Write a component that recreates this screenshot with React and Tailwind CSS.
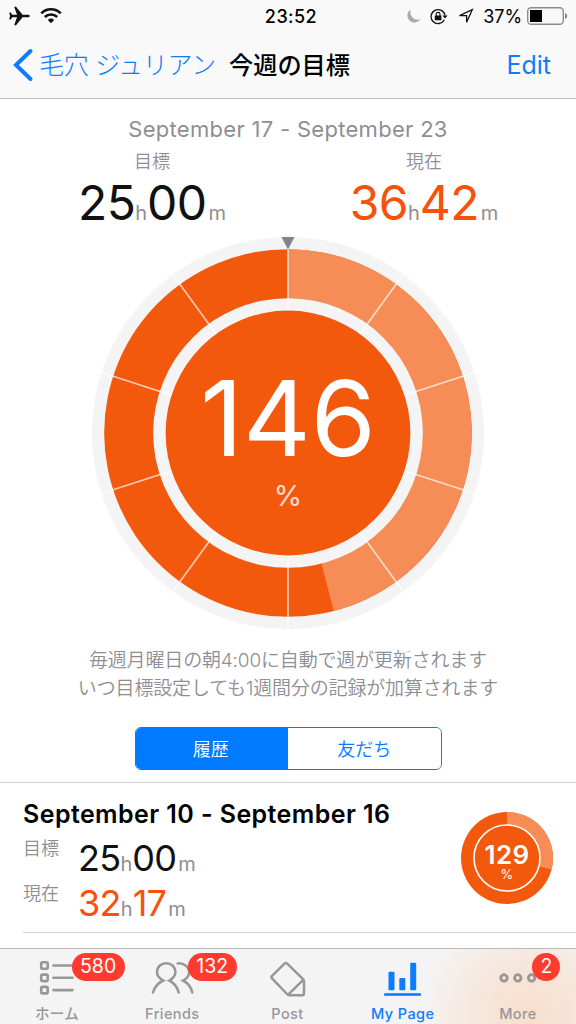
import clsx from "clsx";

const ORANGE = "#f2590d";
const LIGHT = "#f68c56";

const polar = (cx, cy, r, deg) => {
  const a = ((deg - 90) * Math.PI) / 180;
  return [cx + r * Math.cos(a), cy + r * Math.sin(a)];
};

const wedge = (cx, cy, r, deg) => {
  const [x, y] = polar(cx, cy, r, deg);
  return `M${cx} ${cy}V${cy - r}A${r} ${r} 0 ${deg > 180 ? 1 : 0} 1 ${x} ${y}Z`;
};

function StatusBar() {
  return (
    <div className="flex h-8 items-center justify-between px-2 text-black">
      <div className="flex w-[206px] items-center gap-[10px]">
        <svg width="22" height="20" viewBox="0 0 22 20">
          <path
            d="M21.8 10c0-.9-.8-1.200-1.700-1.200h-5.500L8 .8H6.200L9 8.800H4.400L2.600 6.400H1.200L2 10l-.8 3.600h1.400L4.400 11.200H9l-2.800 8H8l6.600-8h5.500c.9 0 1.700-.3 1.700-1.200z"
            fill="#111"
          />
        </svg>
        <svg width="22" height="16" viewBox="0 0 22 16" fill="none" stroke="#111">
          <path d="M1.3 5.3a13.8 13.8 0 0 1 19.4 0" strokeWidth="2.6" />
          <path d="M4.8 9a8.8 8.8 0 0 1 12.4 0" strokeWidth="2.6" />
          <path d="M11 15.2l-3.2-3.3a4.6 4.6 0 0 1 6.4 0z" fill="#111" stroke="none" />
        </svg>
      </div>
      <span className="text-[18px] font-medium tracking-[0.45px]">23:52</span>
      <div className="flex w-[200px] items-center justify-end">
        <svg width="16" height="16" viewBox="0 0 16 16" className="mr-[8px]">
          <path d="M5 1.500a7 7 0 1 0 9.500 9.500A7.200 7.200 0 0 1 5 1.500z" fill="#aaa" />
        </svg>
        <svg width="18" height="17" viewBox="0 0 18 17" className="mr-[10px]">
          <path d="M14.3 11.8A7 7 0 1 1 15 7.500" fill="none" stroke="#111" strokeWidth="1.3" />
          <path d="M12.4 7.500h5.200L15 10.500z" fill="#111" />
          <rect x="4.8" y="7.5" width="6.6" height="4.7" rx=".5" fill="#111" />
          <path d="M6.200 8V6.300a1.900 1.900 0 0 1 3.800 0V8" fill="none" stroke="#111" strokeWidth="1.1" />
        </svg>
        <svg width="16" height="16" viewBox="0 0 16 16" className="mr-[9px]">
          <path d="M1.5 7.700L14.300 1.700 8.600 14.300V7.700z" fill="none" stroke="#111" strokeWidth="1.3" />
        </svg>
        <span className="mr-[5px] text-[18px] tracking-[-0.1px]">37%</span>
        <svg width="41" height="18" viewBox="0 0 41 18">
          <rect x=".7" y=".7" width="35.6" height="16.6" rx="3.5" fill="none" stroke="#8c8c8c" strokeWidth="1.4" />
          <rect x="3" y="3" width="12" height="12" fill="#000" />
          <path d="M38 6c3 1 3 5 0 6z" fill="#8c8c8c" />
        </svg>
      </div>
    </div>
  );
}

function NavBar() {
  return (
    <div className="flex h-[66px] items-center pl-3 text-[#0f7bff]">
      <svg width="22" height="34" viewBox="0 0 22 34" className="shrink-0">
        <path d="M18.5 3L4 17l14.500 14" fill="none" stroke="currentColor" strokeWidth="4" strokeLinecap="round" />
      </svg>
      <span className="mt-[2px] ml-[5px] w-[190px] text-[25px] font-light tracking-[-0.3px] whitespace-nowrap">
        毛穴 ジュリアン
      </span>
      <h1 className="mt-[2px] text-[24.2px] font-medium whitespace-nowrap text-black">今週の目標</h1>
      <span className="mt-[2px] mr-[25px] ml-auto text-[25px]">Edit</span>
    </div>
  );
}

function Duration({ hours, minutes, accent, small }) {
  return (
    <div
      className={clsx(
        "flex items-baseline whitespace-nowrap",
        small ? "text-[36px] leading-[44px]" : "text-[48px] leading-[56px]",
        accent ? "text-[#f9500c]" : "text-[#111]",
      )}
    >
      <span className={small ? "tracking-[-0.7px]" : "tracking-[-0.6px]"}>{hours}</span>
      <span className="text-[20px] text-[#8e8e93]">h</span>
      <span className={small ? "tracking-[-0.7px]" : "tracking-[-0.6px]"}>{minutes}</span>
      <span className="ml-[2px] text-[20px] text-[#8e8e93]">m</span>
    </div>
  );
}

function GoalColumn({ label, ...time }) {
  return (
    <div className="flex w-[148px] flex-col items-center">
      <span className="text-[18px] leading-[24px] font-[350] text-[#8e8e93]">{label}</span>
      <div className="mt-px">
        <Duration {...time} />
      </div>
    </div>
  );
}

function GoalRing({ percent }) {
  const c = 196.5;
  return (
    <div className="grid shrink-0 place-items-center">
      <svg width="392" height="392" viewBox="0 0 393 393" className="col-start-1 row-start-1">
        <circle cx={c} cy={c} r="196.5" fill="#f4f4f4" />
        <circle cx={c} cy={c} r="184.3" fill={ORANGE} />
        <path d={wedge(c, c, 184.3, (percent % 100) * 3.6)} fill={LIGHT} />
        <circle cx={c} cy={c} r="135.2" fill="#f4f4f4" />
        {Array.from({ length: 10 }, (_, i) => {
          const [x, y] = polar(c, c, 196.5, i * 36);
          return (
            <line key={i} x1={c} y1={c} x2={x} y2={y} stroke="#fff" strokeOpacity=".7" strokeWidth="1.6" />
          );
        })}
        <circle cx={c} cy={c} r="122.7" fill={ORANGE} />
        <path d="M190 0h13l-6.5 12.500z" fill="#7e858c" />
      </svg>
      <div className="z-10 col-start-1 row-start-1 flex flex-col items-center text-white">
        <span className="mt-[9px] text-[105px] leading-[105px] tracking-[-0.1px]">{percent}</span>
        <span className="mt-[11px] text-[29px] leading-[30px] opacity-80">%</span>
      </div>
    </div>
  );
}

function Segmented() {
  return (
    <div className="mx-auto mt-[24px] flex h-[43px] w-[307px] shrink-0 overflow-hidden rounded-[6px] border-[1.5px] border-[#007aff] text-[18px]">
      <button className="w-1/2 bg-[#007aff] pt-[2px] pr-[2px] font-[350] text-white">履歴</button>
      <button className="w-1/2 bg-white pt-[2px] font-[350] text-[#007aff]">友だち</button>
    </div>
  );
}

function MiniRing({ percent }) {
  return (
    <div className="grid place-items-center">
      <svg width="92" height="92" viewBox="0 0 92 92" className="col-start-1 row-start-1">
        <circle cx="46" cy="46" r="46" fill={ORANGE} />
        <path d={wedge(46, 46, 46, (percent % 100) * 3.6)} fill={LIGHT} />
        <circle cx="46" cy="46" r="33" fill={ORANGE} stroke="#fff" strokeWidth="1.6" />
      </svg>
      <div className="z-10 col-start-1 row-start-1 flex flex-col items-center text-white">
        <span className="mt-[6px] text-[26px] leading-[26px] font-semibold tracking-[0.4px]">{percent}</span>
        <span className="text-[13px] leading-[12px]">%</span>
      </div>
    </div>
  );
}

function HistoryRow({ title, goal, current, percent }) {
  return (
    <div className="ml-[23px] flex h-[150px] border-b border-[#d4d4d6] pr-[23px]">
      <div className="flex-1 pt-[15px]">
        <h2 className="text-[25px] leading-[32px] font-semibold tracking-[0.42px] text-black">{title}</h2>
        <div className="mt-[6px] flex h-[45px]">
          <span className="w-[55px] text-[18px] leading-[26px] font-[350] text-[#8e8e93]">目標</span>
          <Duration small {...goal} />
        </div>
        <div className="flex h-[45px]">
          <span className="w-[55px] text-[18px] leading-[26px] font-[350] text-[#8e8e93]">現在</span>
          <Duration small accent {...current} />
        </div>
      </div>
      <div className="pt-[29px]">
        <MiniRing percent={percent} />
      </div>
    </div>
  );
}

const icons = {
  home: (
    <svg width="46" height="38" viewBox="0 0 46 38" fill="none" stroke="currentColor" strokeWidth="2.6">
      {[4.5, 16.8, 29.1].map((y) => (
        <g key={y}>
          <rect x="7.2" y={y - 3.2} width="6.5" height="6.5" rx="1.5" />
          <path d={`M19.5 ${y}h19`} strokeLinecap="round" />
        </g>
      ))}
    </svg>
  ),
  friends: (
    <svg width="46" height="38" viewBox="0 0 46 38" fill="none" stroke="currentColor" strokeWidth="2.5" strokeLinecap="round">
      <path d="M4 31.500C5.500 26 9 22 14.300 19.500 10.300 17.500 8 14.500 8 11c0-5 4-8.700 9.200-8.700S26.400 6 26.400 11c0 3.500-2.300 6.500-6.100 8.500 5.300 2.500 8 6.500 9.400 12" />
      <path d="M28.700 2.400C35.500 2 40.200 6 40.200 11c0 3.500-2.200 6.500-6.200 8.500 5.300 2.500 8 6.500 9.300 12" />
    </svg>
  ),
  post: (
    <svg width="46" height="38" viewBox="0 0 46 38" fill="none" stroke="currentColor" strokeWidth="2.5" strokeLinejoin="round">
      <path d="M19.500 2.600L7 14.800q-1.200 1.300 0 2.600L22 33q1 1.200 2.600 1.200H37q2 0 2-2V20.500q0-1.500-1.200-2.600L22.200 2.600q-1.300-1.300-2.700 0z" />
      <path d="M38.200 18.800L23.200 33.700" />
    </svg>
  ),
  page: (
    <svg width="46" height="38" viewBox="0 0 46 38" fill="currentColor">
      <rect x="8.5" y="10.7" width="6" height="18.6" rx="1" />
      <rect x="19.3" y="17" width="6" height="12.3" rx="1" />
      <rect x="30.2" y="1.7" width="6" height="27.6" rx="1" />
      <rect x="4.2" y="32.2" width="36.7" height="2.6" />
    </svg>
  ),
  more: (
    <svg width="46" height="38" viewBox="0 0 46 38" fill="none" stroke="currentColor" strokeWidth="2.8">
      <circle cx="9" cy="16.9" r="3.2" />
      <circle cx="22.8" cy="16.9" r="3.2" />
      <circle cx="36.6" cy="16.9" r="3.2" />
    </svg>
  ),
};

const tabs = [
  { id: "home", label: "ホーム", badge: "580", badgeClass: "left-[14px] w-[53px]" },
  { id: "friends", label: "Friends", badge: "132", badgeClass: "left-[15px] w-[49px]" },
  { id: "post", label: "Post" },
  { id: "page", label: "My Page", active: true },
  { id: "more", label: "More", badge: "2", badgeClass: "left-[14px] w-[28px]" },
];

function TabBar() {
  return (
    <nav className="mt-auto flex h-[76px] shrink-0 border-t border-[#b9b9bb] bg-[#f4f4f4] bg-[radial-gradient(ellipse_110px_110px_at_530px_66px,#f8dfcd_0%,#f7e4d6_35%,#f5ece6_70%,rgba(244,244,244,0)_100%)]">
      {tabs.map((tab) => (
        <div
          key={tab.id}
          className={clsx(
            "relative flex flex-1 flex-col items-center pt-[12px] pr-[1px]",
            tab.active ? "text-[#0f7bff]" : "text-[#97979a]",
          )}
        >
          <div className="h-[38px]">{icons[tab.id]}</div>
          <span className="mt-[5px] text-[14.5px] leading-[20px] font-medium tracking-[0.4px]">{tab.label}</span>
          {tab.badge && (
            <div className="absolute top-[4px] left-1/2">
              <span
                className={clsx(
                  "relative flex h-[28px] items-center justify-center rounded-full bg-[#ff3b30] text-[19.5px] text-white",
                  tab.badgeClass,
                )}
              >
                {tab.badge}
              </span>
            </div>
          )}
        </div>
      ))}
    </nav>
  );
}

export default function App() {
  return (
    <div className="flex h-[1024px] w-[576px] flex-col overflow-hidden bg-white font-['Inter','Noto_Sans_CJK_JP',sans-serif]">
      <header className="h-[99px] shrink-0 border-b border-[#b9b9bb] bg-[#f9f9f9]">
        <StatusBar />
        <NavBar />
      </header>

      <section className="flex flex-col items-center pt-[15px]">
        <p className="text-[22px] leading-[30px] tracking-[0.3px] text-[#8e8e93]">September 17 - September 23</p>
        <div className="mt-[6px] flex w-full justify-between px-[78px]">
          <GoalColumn label="目標" hours="25" minutes="00" />
          <GoalColumn label="現在" hours="36" minutes="42" accent />
        </div>
        <div className="-mt-[4px]">
          <GoalRing percent={146} />
        </div>
        <p className="mt-[18px] text-center text-[19px] leading-[28px] font-[350] tracking-[-0.16px] text-[#8e8e93]">
          毎週月曜日の朝4:00に自動で週が更新されます
          <br />
          いつ目標設定しても1週間分の記録が加算されます
        </p>
      </section>

      <Segmented />

      <section className="mt-[12px] border-t border-[#d4d4d6]">
        <HistoryRow
          title="September 10 - September 16"
          goal={{ hours: "25", minutes: "00" }}
          current={{ hours: "32", minutes: "17" }}
          percent={129}
        />
      </section>

      <TabBar />
    </div>
  );
}
